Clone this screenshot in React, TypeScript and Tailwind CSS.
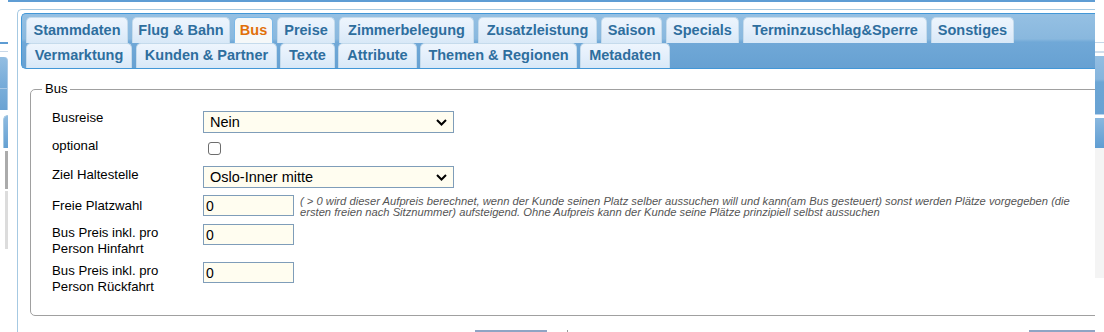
import React from "react";

type Tab = { label: string; w: number; ml: number; active?: boolean };

const row1: Tab[] = [
  { label: "Stammdaten", w: 102, ml: 0 },
  { label: "Flug & Bahn", w: 98, ml: 4 },
  { label: "Bus", w: 39, ml: 4, active: true },
  { label: "Preise", w: 58, ml: 4 },
  { label: "Zimmerbelegung", w: 135, ml: 4 },
  { label: "Zusatzleistung", w: 119, ml: 4 },
  { label: "Saison", w: 61, ml: 4 },
  { label: "Specials", w: 73, ml: 4 },
  { label: "Terminzuschlag&Sperre", w: 184, ml: 4 },
  { label: "Sonstiges", w: 83, ml: 4 },
];

const row2: Tab[] = [
  { label: "Vermarktung", w: 106, ml: 0 },
  { label: "Kunden & Partner", w: 141, ml: 4 },
  { label: "Texte", w: 55, ml: 3 },
  { label: "Attribute", w: 79, ml: 3 },
  { label: "Themen & Regionen", w: 157, ml: 3 },
  { label: "Metadaten", w: 90, ml: 3 },
];

function TabItem({ t, h }: { t: Tab; h: number }) {
  return (
    <div
      style={{ width: t.w, marginLeft: t.ml, height: h }}
      className={
        "flex items-center justify-center rounded-t-[5px] border border-b-0 text-[14.5px] font-bold whitespace-nowrap " +
        (t.active
          ? "border-[#79b7e7] bg-[#f5f8f9] text-[#e17009]"
          : "border-[#c5dbec] bg-[linear-gradient(to_bottom,#edf5fd_0%,#e4effb_50%,#d8e8f7_100%)] text-[#2e6e9e]")
      }
    >
      {t.label}
    </div>
  );
}

function Chevron() {
  return (
    <svg width="11" height="7" viewBox="0 0 11 7" className="shrink-0">
      <path d="M1 1 L5.5 5.5 L10 1" fill="none" stroke="#000" strokeWidth="2" />
    </svg>
  );
}

function SelectBox({ value }: { value: string }) {
  return (
    <div className="flex h-[22px] w-[251px] items-center justify-between border border-[#7f9db9] bg-[#fffdf0] pl-[6px] pr-[6px] text-[14.5px] leading-none text-black">
      <span>{value}</span>
      <Chevron />
    </div>
  );
}

function InputBox({ value }: { value: string }) {
  return (
    <div className="flex h-[21px] w-[91px] shrink-0 items-center border border-[#7f9db9] bg-[#fffdf0] pl-[2px] text-[14px] leading-none text-black">
      {value}
    </div>
  );
}

function LeftStrip() {
  return (
    <div className="flex w-[8px] shrink-0 flex-col">
      <div className="h-[42px]" />
      <div className="h-[2px] bg-[#5d9cd3]" />
      <div className="h-[7px]" />
      <div className="h-[1px] bg-[#c8d8e8]" />
      <div className="h-[5px]" />
      <div className="h-[31px] rounded-tr-[4px] border-r border-[#a9c9e6] bg-[linear-gradient(to_bottom,#93bee2,#74aad8)]" />
      <div className="h-[22px] border-r border-t border-[#a9c9e6] bg-[linear-gradient(to_bottom,#79add9,#6aa3d3)]" />
      <div className="h-[5px]" />
      <div className="ml-[3px] h-[33px] rounded-tl-[5px] border-l border-t border-[#a6c9e2] bg-[linear-gradient(to_bottom,#8fbbe0,#64a0d2)]" />
      <div className="h-[3px]" />
      <div className="ml-[5px] h-[38px] bg-[#ababab]" />
      <div className="h-[2px]" />
      <div className="ml-[5px] h-[58px] bg-[#dcdcdc]" />
    </div>
  );
}

function RightStrip() {
  return (
    <div className="flex w-[9px] shrink-0 flex-col">
      <div className="h-[42px]" />
      <div className="h-[1px] bg-[#c4d6e8]" />
      <div className="h-[8px]" />
      <div className="h-[2px] bg-[#cfdeec]" />
      <div className="h-[3px]" />
      <div className="h-[59px] border-b border-[#b9d3ec] bg-[linear-gradient(to_bottom,#93bee2_0%,#86b5dd_40%,#6ca6d5_45%,#68a2d3_100%)]" />
      <div className="h-[3px]" />
      <div className="h-[30px] bg-[linear-gradient(to_bottom,#8ab8df,#5f9dd2)]" />
      <div className="h-[130px] bg-[#f4f4f4]" />
    </div>
  );
}

export default function App() {
  return (
    <div className="flex h-[332px] w-[1104px] overflow-hidden bg-white font-['Liberation_Sans',Arial,sans-serif] text-black">
      <LeftStrip />
      <div className="flex w-[1087px] shrink-0 flex-col overflow-hidden">
        <div className="h-[2px] bg-[#5f9dd4]" />
        <div className="flex-1 pl-[9px] pt-[7px]">
          <div className="h-full rounded-tl-[5px] border-l border-t border-[#a6c9e2] pl-[3px] pt-[3px]">
            {/* tab header */}
            <div className="rounded-l-[5px] border border-r-0 border-[#4297d7] bg-[linear-gradient(to_bottom,#95c0e3_0%,#89b8de_46%,#70a8d7_52%,#67a1d2_100%)] pl-[4px] pt-[3px]">
              <div className="flex">
                {row1.map((t) => (
                  <TabItem key={t.label} t={t} h={26} />
                ))}
              </div>
              <div className="flex">
                {row2.map((t) => (
                  <TabItem key={t.label} t={t} h={25} />
                ))}
              </div>
            </div>

            {/* panel body */}
            <div className="pl-[9px] pt-[12px]">
              <fieldset className="w-[1200px] rounded-[5px] border border-[#a0a0a0]">
                <legend className="ml-[11px] px-[3px] text-[13px] leading-[16px]">Bus</legend>
                <div className="pl-[21px] pt-[13px] pb-[15px] text-[13.2px] leading-[16px]">
                  {/* Busreise */}
                  <div className="flex h-[28px] items-start">
                    <div className="w-[151px]">Busreise</div>
                    <div className="mt-[1px]">
                      <SelectBox value="Nein" />
                    </div>
                  </div>
                  {/* optional */}
                  <div className="flex h-[28px] items-start">
                    <div className="w-[151px]">optional</div>
                    <div className="ml-[5px] mt-[4px] h-[13px] w-[13px] rounded-[3px] border border-[#6d6d6d] bg-white" />
                  </div>
                  {/* Ziel Haltestelle */}
                  <div className="flex h-[29px] items-start">
                    <div className="w-[151px] pt-[1px]">Ziel Haltestelle</div>
                    <SelectBox value="Oslo-Inner mitte" />
                  </div>
                  {/* Freie Platzwahl */}
                  <div className="flex h-[29px] items-start">
                    <div className="w-[151px] pt-[3px]">Freie Platzwahl</div>
                    <InputBox value="0" />
                    <div className="ml-[6px] mt-[1px] whitespace-nowrap text-[11.2px] italic leading-[11px] text-[#555]">
                      <div>( &gt; 0 wird dieser Aufpreis berechnet, wenn der Kunde seinen Platz selber aussuchen will und kann(am Bus gesteuert) sonst werden Plätze vorgegeben (die</div>
                      <div>ersten freien nach Sitznummer) aufsteigend. Ohne Aufpreis kann der Kunde seine Plätze prinzipiell selbst aussuchen</div>
                    </div>
                  </div>
                  {/* Hinfahrt */}
                  <div className="flex h-[38px] items-start">
                    <div className="w-[151px] pt-[1px]">
                      Bus Preis inkl. pro
                      <br />
                      Person Hinfahrt
                    </div>
                    <InputBox value="0" />
                  </div>
                  {/* Rückfahrt */}
                  <div className="flex h-[38px] items-start">
                    <div className="w-[151px] pt-[1px]">
                      Bus Preis inkl. pro
                      <br />
                      Person Rückfahrt
                    </div>
                    <InputBox value="0" />
                  </div>
                </div>
              </fieldset>
              <div className="mt-[14px] flex h-[2px]">
                <div className="ml-[445px] w-[73px] bg-[#8fa4c4]" />
                <div className="ml-[20px] w-[1px] bg-[#999]" />
                <div className="ml-[461px] w-[66px] bg-[#8fa4c4]" />
              </div>
            </div>
          </div>
        </div>
      </div>
      <RightStrip />
    </div>
  );
}
